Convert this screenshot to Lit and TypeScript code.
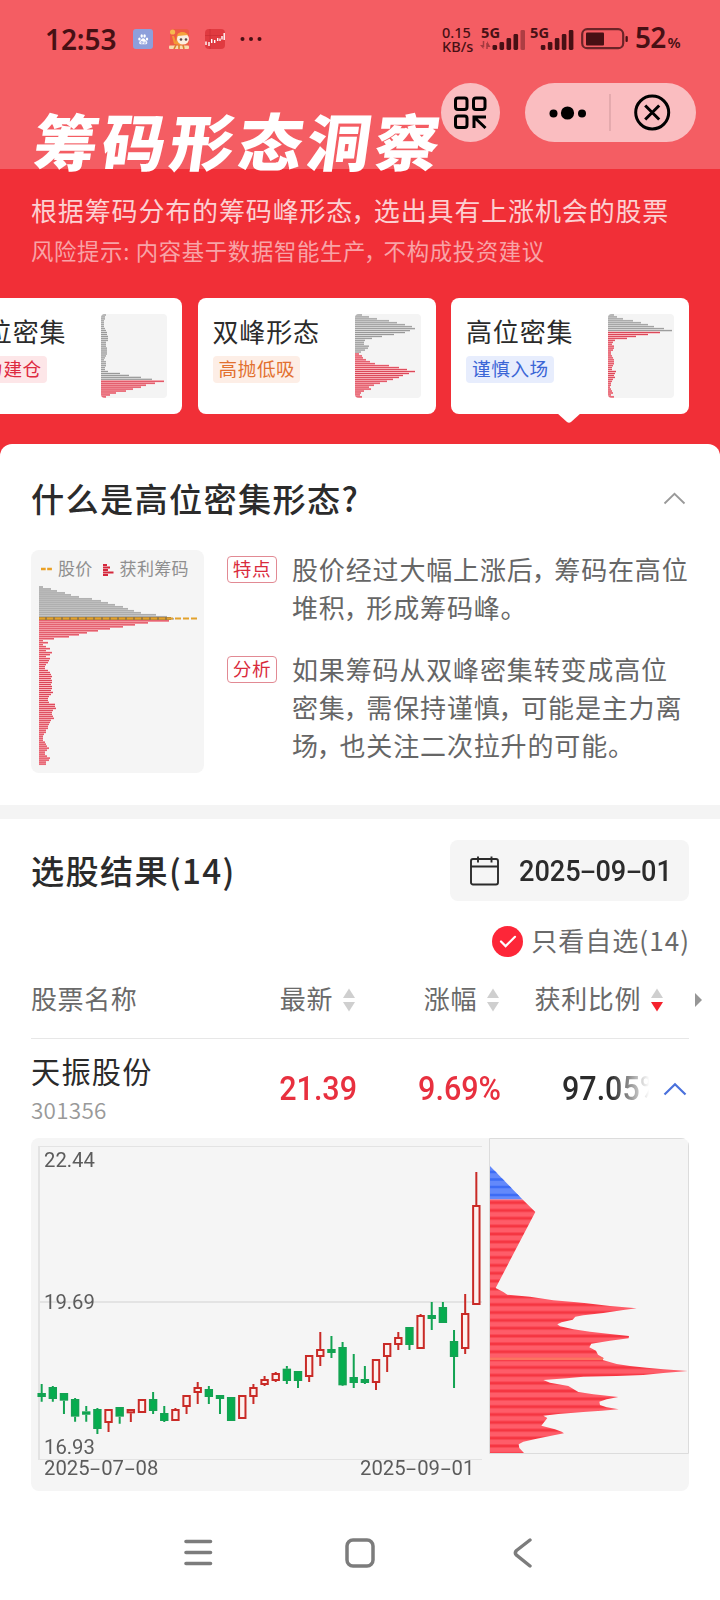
import { LitElement, html, svg, css } from "lit";
import { customElement, property } from "lit/decorators.js";

type Pattern = { name: string; tag: string; tone: string; rows: number[]; split: number; active?: boolean };

const PATTERNS: Pattern[] = [
  {
    name: "低位密集", tag: "主力建仓", tone: "red", split: 34,
    rows: [5, 4, 4, 3, 3, 3, 3, 4, 5, 6, 6, 7, 7, 7, 5, 5, 5, 6, 6, 6, 6, 5, 4, 3, 5, 5, 5, 4, 4, 7, 19, 28, 40, 51, 63, 54, 45, 40, 32, 25, 15, 9, 5],
  },
  {
    name: "双峰形态", tag: "高抛低吸", tone: "orange", split: 20,
    rows: [7, 14, 22, 34, 42, 50, 57, 60, 55, 50, 39, 27, 17, 10, 9, 9, 14, 13, 10, 6, 4, 7, 8, 11, 15, 20, 34, 44, 52, 60, 54, 48, 44, 38, 32, 25, 19, 14, 16, 9, 6, 5, 7],
  },
  {
    name: "高位密集", tag: "谨慎入场", tone: "blue", split: 8, active: true,
    rows: [6, 9, 15, 25, 33, 40, 46, 56, 64, 52, 40, 28, 19, 7, 5, 4, 6, 6, 5, 3, 3, 4, 5, 6, 6, 6, 5, 4, 4, 8, 7, 6, 7, 5, 4, 3, 3, 2, 3, 4, 5, 3, 6],
  },
];

const SAMPLE_ROWS = [
  4, 12, 18, 26, 32, 40, 53, 62, 69, 76, 84, 89, 95, 102, 117, 128, 135, 130, 109, 96, 84, 71, 59, 48, 40, 30, 15, 4, 9, 4,
  7, 11, 7, 13, 11, 7, 11, 10, 9, 7, 6, 6, 9, 11, 12, 13, 12, 13, 13, 12, 13, 13, 12, 14, 12, 10, 9, 9, 10, 16,
  16, 17, 14, 13, 13, 14, 15, 12, 11, 10, 9, 9, 7, 7, 5, 4, 4, 4, 6, 7, 8, 10, 8, 6, 6, 8, 11, 10, 7, 7,
];

/* direction, high, body top, body bottom, low (in thirds of a pixel) */
const CANDLES: [string, number, number, number, number][] = [
  ["g", 762, 789, 801, 815], ["g", 768, 771, 807, 815], ["g", 789, 789, 812, 852], ["g", 804, 807, 860, 875],
  ["g", 828, 844, 854, 875], ["g", 834, 837, 897, 912], ["r", 837, 837, 879, 906], ["g", 831, 831, 860, 881],
  ["r", 837, 837, 850, 876], ["r", 807, 807, 849, 849], ["g", 786, 807, 843, 852], ["g", 828, 849, 873, 876],
  ["r", 834, 837, 873, 873], ["r", 795, 795, 831, 852], ["r", 756, 771, 789, 822], ["g", 768, 777, 801, 822],
  ["g", 795, 795, 807, 852], ["g", 801, 801, 873, 873], ["r", 795, 795, 867, 867], ["r", 762, 771, 801, 822],
  ["r", 738, 747, 765, 768], ["r", 726, 729, 753, 756], ["g", 708, 716, 753, 762], ["g", 723, 723, 753, 774],
  ["r", 675, 675, 741, 756], ["r", 606, 657, 681, 708], ["g", 618, 657, 669, 684], ["g", 636, 651, 766, 768],
  ["g", 672, 741, 759, 774], ["g", 708, 747, 759, 762], ["r", 687, 687, 759, 780], ["r", 639, 639, 681, 726],
  ["r", 606, 621, 645, 660], ["g", 591, 591, 645, 660], ["r", 552, 555, 657, 657], ["g", 516, 555, 567, 600],
  ["g", 516, 531, 579, 579], ["g", 600, 633, 681, 774], ["r", 492, 549, 657, 672], ["r", 126, 225, 525, 525],
];

const CHIP_EDGE =
  "60,108 157,208 196,246 77,474 100,486 112,494 180,500 250,511 320,517 350,520 420,528 500,535 460,540 400,549 340,556 316,560 308,569 275,577 262,583 270,589 310,598 360,605 420,612 477,618 476,625 420,632 364,641 358,652 378,662 384,674 401,684 398,690 440,702 480,708 530,713 580,718 654,723 580,729 520,735 440,738 340,740 290,745 220,750 240,758 295,768 325,786 370,793 445,801 410,808 388,815 390,825 410,832 446,838 395,842 340,846 265,852 220,857 232,864 214,887 255,898 275,905 282,910 255,915 200,926 160,935 146,943 148,954 162,969 60,969";

/* Full-width commas take less room than a full glyph. */
const tight = (s: string) =>
  s.split(/([，])/).map((p) => (p === "，" ? html`<span class="pc">，</span>` : p));

/* Hyphens in dates are drawn as wide as a digit. */
const dashed = (s: string) =>
  s.split("-").map((p, i) => (i ? html`<span class="hy">-</span>${p}` : p));

@customElement("chip-bars")
class ChipBars extends LitElement {
  @property({ attribute: false }) rows: number[] = [];
  @property({ type: Number }) split = 0;
  @property({ type: Number }) pitch = 2;
  static styles = css`
    :host { display: block; }
    svg { display: block; width: 100%; height: 100%; }
    .g { fill: #979797; } .r { fill: #da4557; }
    .gl { fill: #d4d4d4; } .rl { fill: #fca7ae; }
  `;
  render() {
    return html`<svg>
      ${this.rows.map((w, i) => {
        const c = i < this.split ? "g" : "r";
        const y = i * this.pitch;
        return svg`<rect class=${c + "l"} x="0" y=${y} width=${w} height=${this.pitch}/><rect class=${c} x="0" y=${y + 0.5} width=${w} height=${this.pitch / 2}/>`;
      })}
    </svg>`;
  }
}

@customElement("status-bar")
class StatusBar extends LitElement {
  static styles = css`
    :host { display: flex; align-items: center; height: 78px; padding: 0 40px 0 45px; color: #471014; font-family: "Noto Sans", "Open Sans", sans-serif; box-sizing: border-box; white-space: nowrap; }
    svg { display: block; flex: none; }
    .time { width: 88px; font-size: 28px; font-weight: 600; letter-spacing: -0.1px; line-height: 40px; }
    .apps { display: flex; gap: 16px; align-items: center; }
    .dots { margin-left: 15px; }
    .net { margin-left: auto; width: 38px; font-size: 14.5px; line-height: 14px; font-weight: 500; }
    .net div { height: 14px; }
    .sig { margin-right: 5px; }
    .sig text { font: 700 14px "Noto Sans", sans-serif; }
    .sig.b { margin-right: 5px; }
    .pct { width: 45px; margin-left: 6px; font-size: 28px; font-weight: 600; line-height: 40px; letter-spacing: -0.8px; }
    .pct small { font-size: 15px; letter-spacing: 0; margin-left: 2px; }
  `;
  bars(x: number, ghost: boolean) {
    const h = [5, 8, 12, 16, 20];
    return svg`${h.map((v, i) => svg`<rect x=${x + i * 7} y=${23 - v} width="4.6" height=${v} rx="1.4" opacity=${ghost && i === 4 ? 0.4 : 1}/>`)}`;
  }
  render() {
    return html`
      <div class="time">12:53</div>
      <div class="apps">
        <svg width="20" height="20"><rect width="20" height="20" rx="3" fill="#8e9fdb" />
          <g fill="#fff"><ellipse cx="6.4" cy="10" rx="1.2" ry="1.5" /><ellipse cx="8.7" cy="7" rx="1.2" ry="1.7" /><ellipse cx="11.6" cy="7" rx="1.2" ry="1.7" /><ellipse cx="14" cy="10" rx="1.2" ry="1.5" /><path d="M10.2 9.2c1.6 0 2 1.8 3.3 2.8 1.5 1.4.8 3.4-1 3.3-1.500-.2-3-.2-4.500 0-1.900.1-2.500-1.900-1-3.300 1.200-1 1.600-2.800 3.200-2.800z" /></g>
          <path d="M8 12.6h1.600v1.600H8zM11 12.500v1.700h1.700v-1.700" fill="none" stroke="#8e9fdb" stroke-width=".7" /></svg>
        <svg width="20" height="20"><rect x="1" width="19" height="20" rx="3" fill="#ee5b45" /><circle cx="3.600" cy="3" r="2.600" fill="#f6b94f" /><path d="M3 7l2 8 6 1 8-2V7c-1-4-8-6-11-1l-1 7-2-6z" fill="#f39a35" /><ellipse cx="14" cy="10" rx="6" ry="5.500" fill="#fbeee0" /><path d="M9 5c3-3 8-2 10 1l-10 1z" fill="#f5a43e" /><circle cx="12" cy="10.500" r="1.300" fill="#5b4646" /><circle cx="17" cy="10.500" r="1.300" fill="#5b4646" /><rect y="16.500" width="20" height="3.500" rx="1" fill="#f8dcae" /><path d="M5 20l2-4M10 20v-4M15 20l-1-4" stroke="#d9822c" stroke-width="1.600" /></svg>
        <svg width="20" height="20"><rect width="20" height="20" rx="4" fill="#e03a40" /><path d="M0 6.500h20M5 0v20" stroke="#c62c33" stroke-width=".6" /><path d="M1 12.500v3.500M4 13v4M6.700 10v4M9.700 11v3M12.700 9v3M15 9.500v2.500M17 7v3.500M19.200 4v7" stroke="#fff" stroke-width="1.400" /></svg>
      </div>
      <svg class="dots" width="24" height="6" fill="#471014"><circle cx="2.500" cy="3" r="2" /><circle cx="11" cy="3" r="2" /><circle cx="19.500" cy="3" r="2" /></svg>
      <div class="net"><div>0.15</div><div>KB/s</div></div>
      <svg class="sig" width="45" height="24" fill="#471014"><text x="1" y="10.500" textLength="19" lengthAdjust="spacingAndGlyphs">5G</text>
        <g opacity=".45"><path d="M3.500 14v6M7 16v6" stroke="#471014" stroke-width="1.500" /><path d="M0 18h3.500v4zM7 20h3.500L7 14z" /></g>
        ${this.bars(12.5, true)}</svg>
      <svg class="sig b" width="46" height="24" fill="#471014"><text x="0" y="10.500" textLength="19" lengthAdjust="spacingAndGlyphs">5G</text>${this.bars(10.8, false)}</svg>
      <svg class="bat" width="48" height="22"><rect x="1.200" y="1.200" width="41" height="19" rx="5" fill="none" stroke="#6b2428" stroke-width="2.200" /><rect x="5" y="4.500" width="18" height="13" rx="1" fill="#471014" /><rect x="44.500" y="8" width="2.300" height="6" rx="1.100" fill="#471014" /></svg>
      <div class="pct">52<small>%</small></div>
    `;
  }
}

@customElement("stock-chart")
class StockChart extends LitElement {
  static styles = css`
    :host { display: block; position: relative; width: 658px; height: 353px; background: #f5f5f5; border-radius: 8px; overflow: hidden; }
    svg { display: block; }
    .label { position: absolute; font: 400 21px/24px Roboto, sans-serif; color: #5c5c5c; transform: scaleX(0.965); transform-origin: 0 0; white-space: nowrap; }
    .hy { display: inline-block; width: 12px; text-align: center; transform: scaleX(1.8); }
    .hi { left: 13px; top: 10px; } .mid { left: 13px; top: 152px; } .lo { left: 13px; top: 297px; }
    .from { left: 13px; top: 318px; } .to { left: 329px; top: 318px; }
    .grid { stroke: #e3e3e3; fill: none; }
    .up { stroke: #c92a26; fill: #fdf1ef; stroke-width: 2; }
    .down { stroke: #12a352; fill: #04ae4e; stroke-width: 2; }
  `;
  render() {
    return html`<svg width="658" height="353" viewBox="31 1138 658 353">
      <defs>
        <pattern id="red" x="0" y="1130" width="20" height="7.85" patternUnits="userSpaceOnUse"><rect width="20" height="7.85" fill="#fe5d69" /><rect y="0" width="20" height="1" fill="#fb4855" /><rect y="1" width="20" height="2.400" fill="#f53541" /></pattern>
        <clipPath id="shape"><polygon transform="translate(470 1130) scale(.33333)" points=${CHIP_EDGE} /></clipPath>
      </defs>
      <path class="grid" d="M38 1146.500H482M38 1459.500H482" />
      <path class="grid" stroke-width="2" d="M38 1302H482M39 1146V1460" />
      <path d="M489.500 1453.500V1138.500H688.500V1453.500Z" fill="none" stroke="#dcdcdc" />
      ${CANDLES.map(([d, hi, t, b, lo], i) => {
        const x = 41.67 + i * 11.145;
        const Y = (v: number) => 1130 + v / 3;
        return svg`<g class=${d === "r" ? "up" : "down"}><path d=${`M${x} ${Y(hi)}V${Y(t)}M${x} ${Y(b)}V${Y(lo)}`}/><rect x=${x - 3.2} y=${Y(t) + 1} width="6.4" height=${Math.max(1.4, (b - t) / 3 - 2)}/></g>`;
      })}
      <g clip-path="url(#shape)">
        <rect x="489" y="1160" width="200" height="39.500" fill="#6389fb" />
        <path d="M489 1172h60M489 1179.500h60M489 1187h60M489 1195h60" stroke="#3d6cf5" stroke-width="2.600" />
        <rect x="489" y="1199.500" width="200" height="254" fill="url(#red)" />
        <rect x="489" y="1357.500" width="114" height="2.500" fill="#fb7460" />
      </g>
    </svg>
    <span class="label hi">22.44</span>
    <span class="label mid">19.69</span>
    <span class="label lo">16.93</span>
    <span class="label from">${dashed("2025-07-08")}</span>
    <span class="label to">${dashed("2025-09-01")}</span>`;
  }
}

@customElement("app-root")
class AppRoot extends LitElement {
  static styles = css`
    :host { display: block; width: 720px; height: 1600px; overflow: hidden; font-family: "Noto Sans CJK SC", sans-serif; color: #2b2b2b; white-space: nowrap; }
    * { box-sizing: border-box; }
    svg { display: block; flex: none; }
    .page { position: relative; height: 1600px; background: linear-gradient(#f45d63 169px, #f12f37 169px); }
    .pc { margin-left: -2px; letter-spacing: -0.13em; }
    .hero { height: 444px; display: flex; flex-direction: column; }
    h1 { margin: 27px 0 0 34px; height: 68px; line-height: 68px; font-size: 64px; font-weight: 900; letter-spacing: 4.2px; color: #fff; transform: skewX(-8deg) scaleY(0.96); transform-origin: 0 60%; }
    .sub { margin: 17px 0 0 31px; height: 40px; line-height: 40px; font-size: 26px; letter-spacing: 0.85px; color: #fcd0d2; }
    .risk { margin-left: 31px; height: 40px; line-height: 41px; font-size: 22.4px; letter-spacing: 0.65px; color: #f8a3a7; }
    .cards { margin: 28px 0 0 -56px; display: flex; gap: 15.5px; }
    .card { position: relative; flex: none; width: 238px; height: 116px; border-radius: 8px; background: #fff; padding: 16px 15px 0 15px; display: flex; justify-content: space-between; }
    .card .name { font-size: 26px; letter-spacing: 0.85px; line-height: 34px; height: 34px; margin-top: 0; }
    .tag { margin-top: 8px; display: inline-block; height: 27px; line-height: 24px; padding: 0 5px 0 6px; border-radius: 4px; font-size: 18.6px; letter-spacing: 0.6px; }
    .red { color: #dd2b40; background: #fde6e8; }
    .orange { color: #e2702f; background: #fdeee6; }
    .blue { color: #3b66d6; background: #e7edfd; }
    .mini { width: 66px; height: 84px; border-radius: 4px; background: #f4f4f4; overflow: hidden; }
    .mini chip-bars { height: 84px; }
    .tip { position: absolute; left: 106px; top: 115px; }
    .panel { height: 1156px; background: #fff; border-radius: 12px 12px 0 0; }
    h2 { margin: 0; font-size: 33.2px; font-weight: 500; letter-spacing: 1.3px; line-height: 44px; color: #2b2b2b; }
    .q { display: flex; justify-content: space-between; padding: 32px 34px 0 31px; }
    .q svg { margin-top: 16px; }
    .what { display: flex; padding: 30px 31px 0; height: 285px; }
    .sample { width: 173px; height: 223px; background: #f5f5f5; border-radius: 8px; padding: 8px; position: relative; flex: none; }
    .legend { display: flex; align-items: center; height: 22px; font-size: 17px; color: #8f8f8f; letter-spacing: 0.3px; padding-left: 2px; margin-bottom: 6px; }
    .legend span { line-height: 20px; margin-top: -3px; }
    .legend .k1 { margin: 0 6px 0 0; } .legend .k2 { margin: 1px 6px 0 10px; }
    .sample chip-bars { height: 180px; }
    .price { position: absolute; left: 8px; top: 66.500px; }
    .facts { margin-left: 23px; display: flex; flex-direction: column; gap: 23.5px; }
    .fact { display: flex; gap: 15px; }
    .badge { flex: none; width: 50px; height: 27px; margin-top: 6px; border: 1px solid #e28a94; border-radius: 4px; color: #d92b3c; font-size: 18.6px; letter-spacing: 0.6px; line-height: 22px; text-align: center; }
    .fact p { margin: 0; font-size: 26px; letter-spacing: 0.85px; line-height: 38.2px; color: #666; }
    .rule { height: 14px; background: #f4f4f4; }
    .result { display: flex; justify-content: space-between; padding: 21px 31px 0 31px; }
    .result h2 { margin-top: 8px; }
    .date { width: 239px; height: 61px; background: #f5f5f5; border-radius: 8px; display: flex; align-items: center; padding: 0 0 0 20px; font: 500 29.5px/60px Roboto, sans-serif; gap: 20px; }
    .date span.v { transform: scaleX(0.92); transform-origin: 0 50%; }
    .hy { display: inline-block; width: 16px; text-align: center; transform: scaleX(1.8) scaleY(0.85); letter-spacing: 0; }
    .only { display: flex; justify-content: flex-end; align-items: center; gap: 8px; height: 40px; margin-top: 20px; padding-right: 30px; font-size: 26px; letter-spacing: 1.05px; color: #6a6a6a; }
    .only span { line-height: 36px; margin-top: -3px; }
    .head { display: grid; grid-template-columns: 150px 175px 144px 164px 1fr; align-items: center; height: 77px; margin: 0 0 0 31px; padding-left: 0; font-size: 26px; letter-spacing: 0.6px; color: #6a6a6a; }
    .head div { display: flex; justify-content: flex-end; align-items: center; gap: 9px; height: 40px; line-height: 36px; }
    .head .l { justify-content: flex-start; }
    .head .l, .head .s { margin-top: -3px; }
    .head .more { margin-right: 18px; }
    .line { height: 1px; margin: 0 31px; background: #e7e7e7; }
    .row { display: grid; grid-template-columns: 150px 176px 144px 61px 90px 1fr; height: 99px; margin: 0 31px; align-items: center; }
    .stock { font-size: 29.2px; letter-spacing: 1.2px; line-height: 36px; margin-top: -2px; }
    .code { font-size: 22.5px; letter-spacing: 0.25px; color: #999; line-height: 30px; margin-top: 6px; font-weight: 350; }
    .num { font: 500 33.500px/40px Roboto, sans-serif; text-align: right; color: #e8303f; padding-top: 1px; transform: scaleX(0.91); transform-origin: 100% 50%; }
    .ratio { grid-column: 5; width: 98px; transform-origin: 0 50%; color: #2b2b2b; overflow: hidden; text-align: left; -webkit-mask-image: linear-gradient(90deg, #000 55%, transparent 98%); mask-image: linear-gradient(90deg, #000 55%, transparent 98%); }
    .row > svg { justify-self: end; margin-right: 2px; }
    .chart { margin-left: 31px; }
    .nav { display: flex; align-items: center; height: 124px; padding-left: 184px; }
    .nav .sq { margin-left: 132px; } .nav .bk { margin-left: 138px; }
    .pill { position: absolute; top: 82.500px; height: 59px; border-radius: 30px; background: #fabdc0; }
    .scan { left: 441px; width: 58.500px; }
    .menu { left: 524.500px; width: 171px; }
  `;

  sorter(down = false) {
    return html`<svg width="14" height="24"><path d="M7 .5l6 9.500H1z" fill="#cfcfcf" /><path d="M7 23.500l6-9.500H1z" fill=${down ? "#f5222d" : "#cfcfcf"} /></svg>`;
  }

  render() {
    return html`<div class="page">
      <header class="hero">
        <status-bar></status-bar>
        <h1>筹码形态洞察</h1>
        <div class="sub">${tight("根据筹码分布的筹码峰形态，选出具有上涨机会的股票")}</div>
        <div class="risk">${tight("风险提示: 内容基于数据智能生产，不构成投资建议")}</div>
        <div class="cards">
          ${PATTERNS.map((p) => html`<div class="card">
            <div><div class="name">${p.name}</div><div class="tag ${p.tone}">${p.tag}</div></div>
            <div class="mini"><chip-bars .rows=${p.rows} .split=${p.split + (p.active ? 1 : 0)} .pitch=${1.95}></chip-bars></div>
            ${p.active ? html`<svg class="tip" width="24" height="11"><path d="M0 0H24L14 9Q12 10.500 10 9Z" fill="#fff" /></svg>` : ""}
          </div>`)}
        </div>
      </header>
      <main class="panel">
        <div class="q"><h2>什么是高位密集形态?</h2>
          <svg width="23" height="13"><path d="M1.500 11.500L11.500 1.800L21.500 11.500" fill="none" stroke="#999" stroke-width="1.800" /></svg></div>
        <section class="what">
          <div class="sample">
            <div class="legend">
              <svg class="k1" width="11" height="4"><path d="M0 2h4.700M6.200 2h4.700" stroke="#eaa024" stroke-width="2.600" /></svg><span>股价</span>
              <svg class="k2" width="11" height="12"><path d="M0 1h4M0 3.500h7M0 6h5M0 8.500h10.500M0 11h5" stroke="#d5283d" stroke-width="1.800" /></svg><span>获利筹码</span>
            </div>
            <chip-bars .rows=${SAMPLE_ROWS} .split=${17} .pitch=${1.99}></chip-bars>
            <svg class="price" width="159" height="3"><path d="M0 1.500H132" stroke="#a07b3e" stroke-width="3" /><path d="M0 1.500H159" stroke="#e3a22d" stroke-width="2" stroke-dasharray="6 2" /></svg>
          </div>
          <div class="facts">
            <div class="fact"><div class="badge">特点</div><p>${tight("股价经过大幅上涨后，筹码在高位")}<br />${tight("堆积，形成筹码峰。")}</p></div>
            <div class="fact"><div class="badge">分析</div><p>如果筹码从双峰密集转变成高位<br />${tight("密集，需保持谨慎，可能是主力离")}<br />${tight("场，也关注二次拉升的可能。")}</p></div>
          </div>
        </section>
        <div class="rule"></div>
        <div class="result"><h2>选股结果(14)</h2>
          <div class="date">
            <svg width="29" height="30" fill="none" stroke="#2b2b2b" stroke-width="1.900"><rect x="1" y="3" width="27" height="25.500" rx="2" /><path d="M1 10.500h27M8 .5v6M21.500 .5v6" /></svg>
            <span class="v">${dashed("2025-09-01")}</span></div></div>
        <div class="only"><svg width="31" height="31"><circle cx="15.500" cy="15.500" r="15.500" fill="#fd2638" /><path d="M9 15.500l4.600 4.600L23 10.800" fill="none" stroke="#fff" stroke-width="2.200" stroke-linecap="round" /></svg><span>只看自选(14)</span></div>
        <div class="head">
          <div class="l">股票名称</div>
          <div><span class="s">最新</span>${this.sorter()}</div>
          <div><span class="s">涨幅</span>${this.sorter()}</div>
          <div><span class="s">获利比例</span>${this.sorter(true)}</div>
          <div class="more"><svg width="7" height="14"><path d="M0 0L7 7L0 14z" fill="#969696" /></svg></div>
        </div>
        <div class="line"></div>
        <div class="row">
          <div><div class="stock">天振股份</div><div class="code">301356</div></div>
          <div class="num">21.39</div>
          <div class="num">9.69%</div>
          <div class="num ratio">97.05%</div>
          <svg width="24" height="14"><path d="M1.500 12.500L12 2.200L22.500 12.500" fill="none" stroke="#4a71dc" stroke-width="2.200" /></svg>
        </div>
        <stock-chart class="chart"></stock-chart>
        <nav class="nav">
          <svg width="29" height="28"><path d="M2 2.500H26.500M2 13.500H26.500M2 24.500H26.500" stroke="#7c7c7c" stroke-width="3.600" stroke-linecap="round" /></svg>
          <svg class="sq" width="30" height="30"><rect x="2" y="2" width="26" height="26" rx="6" fill="none" stroke="#7c7c7c" stroke-width="3.500" /></svg>
          <svg class="bk" width="20" height="30"><path d="M17 2L3.500 12.500Q1.200 15 3.500 17.200L17 28" fill="none" stroke="#7c7c7c" stroke-width="3.400" stroke-linecap="round" stroke-linejoin="round" /></svg>
        </nav>
      </main>
      <div class="pill scan"><svg width="58" height="59" fill="none" stroke="#000" stroke-width="3"><rect x="14.500" y="15" width="11.500" height="11.500" rx="2.500" /><rect x="32.500" y="15" width="11.500" height="11.500" rx="2.500" /><rect x="14.500" y="33" width="11.500" height="11.500" rx="2.500" /><path d="M45 34H33V45M33.500 34.500L44.500 45" /></svg></div>
      <div class="pill menu"><svg width="171" height="59"><circle cx="28.500" cy="30.500" r="4" /><circle cx="42.500" cy="30" r="6.600" /><circle cx="57" cy="30.500" r="4" /><path d="M85 11V48" stroke="#cf979b" /><g fill="none" stroke="#000" stroke-width="3"><circle cx="127.200" cy="29.500" r="16.500" /><path d="M120.200 22.500L134.200 36.500M134.200 22.500L120.200 36.500" /></g></svg></div>
    </div>`;
  }
}
